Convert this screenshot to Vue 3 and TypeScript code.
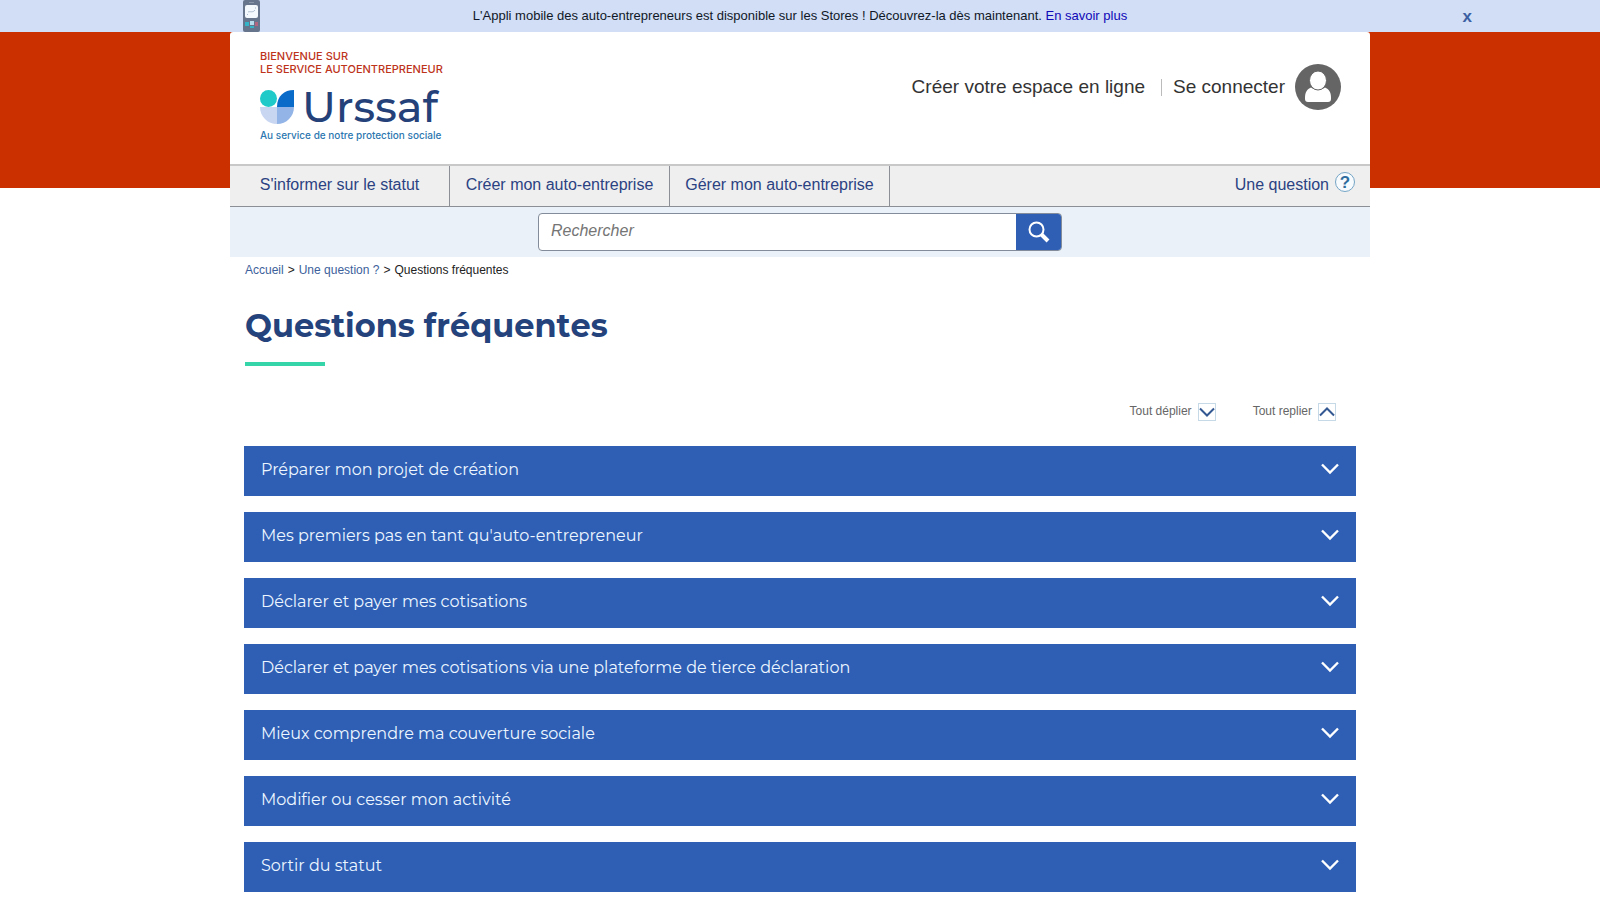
<script setup lang="ts">
import { ref } from 'vue'

interface Section {
  title: string
  open: boolean
}

const bannerVisible = ref<boolean>(true)
const query = ref<string>('')

const navItems: string[] = [
  "S'informer sur le statut",
  'Créer mon auto-entreprise',
  'Gérer mon auto-entreprise',
]

const sections = ref<Section[]>(
  [
    'Préparer mon projet de création',
    "Mes premiers pas en tant qu'auto-entrepreneur",
    'Déclarer et payer mes cotisations',
    'Déclarer et payer mes cotisations via une plateforme de tierce déclaration',
    'Mieux comprendre ma couverture sociale',
    'Modifier ou cesser mon activité',
    'Sortir du statut',
  ].map((title) => ({ title, open: false })),
)

function setAll(open: boolean): void {
  sections.value.forEach((s) => (s.open = open))
}
</script>

<template>
  <div class="page">
    <div v-if="bannerVisible" class="banner">
      <svg class="phone" width="17" height="32" viewBox="0 0 17 32" aria-hidden="true">
        <rect width="17" height="32" rx="2" fill="#66748c" />
        <rect x="2" y="5" width="13" height="13" rx="2" fill="#f4f9fd" />
        <path d="M4.500 15v-1M12 8h1M5 12c2-1 5 1 7-2" stroke="#a9b9cc" fill="none" />
        <path d="M6 2.500h5" stroke="#8a97ab" />
        <rect x="2" y="22" width="4" height="4" fill="#35b4c8" />
        <rect x="7" y="21" width="4" height="4" fill="#b9dcec" />
        <rect x="12" y="22" width="3" height="4" fill="#b2657f" />
        <rect x="7" y="26" width="4" height="2" fill="#35b4c8" />
      </svg>
      <p class="banner-text">
        L'Appli mobile des auto-entrepreneurs est disponible sur les Stores ! Découvrez-la dès maintenant.
        <a href="#">En savoir plus</a>
      </p>
      <button class="close" type="button" aria-label="Fermer" @click="bannerVisible = false">x</button>
    </div>

    <div class="backdrop">
      <div class="container">
        <header class="header">
          <a class="brand" href="#">
            <span class="welcome">BIENVENUE SUR<br />LE SERVICE AUTOENTREPRENEUR</span>
            <span class="logo">
              <svg width="34" height="34" viewBox="0 0 34 34" aria-hidden="true">
                <circle cx="8.500" cy="8.500" r="8.500" fill="#1fcac8" />
                <path d="M17 17C17 6 24 0 34 0v17z" fill="#0a6bc9" />
                <path d="M0 17h17v17C7.500 34 0 26.500 0 17z" fill="#c9d6f2" />
                <path d="M17 17h17c0 9.500-7.500 17-17 17z" fill="#92b4e6" />
              </svg>
              <span class="wordmark">Urssaf</span>
            </span>
            <span class="tagline">Au service de notre protection sociale</span>
          </a>
          <div class="account">
            <a href="#">Créer votre espace en ligne</a>
            <span class="divider"></span>
            <a class="login" href="#">
              Se connecter
              <svg width="46" height="46" viewBox="0 0 46 46" aria-hidden="true">
                <circle cx="23" cy="23" r="23" fill="#656565" />
                <path
                  d="M16 23.500c-4 1.500-6 5-6 10V35c0 2 1 3 3 3h20c2 0 3-1 3-3v-1.500c0-5-2-8.500-6-10-4 3-10 3-14 0z"
                  fill="#fff"
                />
                <ellipse cx="23" cy="16.500" rx="8.500" ry="9.500" fill="#fff" stroke="#656565" stroke-width="1" />
              </svg>
            </a>
          </div>
        </header>

        <nav class="nav">
          <a v-for="item in navItems" :key="item" class="nav-item" href="#">{{ item }}</a>
          <a class="help" href="#">
            Une question
            <span class="help-icon" aria-hidden="true">?</span>
          </a>
        </nav>

        <form class="search" role="search" @submit.prevent>
          <div class="search-box">
            <input v-model="query" type="text" placeholder="Rechercher" aria-label="Rechercher" />
            <button type="submit" aria-label="Lancer la recherche">
              <svg width="22" height="22" viewBox="0 0 22 22" fill="none" stroke="#fff" aria-hidden="true">
                <circle cx="8.500" cy="8.500" r="7" stroke-width="2" />
                <path d="M13.500 13.500L20 20" stroke-width="4" />
              </svg>
            </button>
          </div>
        </form>

        <main class="main">
          <div class="crumbs">
            <a href="#">Accueil</a><span>&gt;</span><a href="#">Une question ?</a><span>&gt;</span>Questions
            fréquentes
          </div>
          <h1>Questions fréquentes</h1>

          <div class="toggles">
            <button type="button" @click="setAll(true)">
              Tout déplier
              <svg width="18" height="18" viewBox="0 0 18 18" fill="none" aria-hidden="true">
                <rect x="0.500" y="0.500" width="17" height="17" stroke="#c5d9e6" />
                <path d="M2 5.500l7 7 7-7" stroke="#345992" stroke-width="2" />
              </svg>
            </button>
            <button type="button" @click="setAll(false)">
              Tout replier
              <svg width="18" height="18" viewBox="0 0 18 18" fill="none" aria-hidden="true">
                <rect x="0.500" y="0.500" width="17" height="17" stroke="#c5d9e6" />
                <path d="M2 12.500l7-7 7 7" stroke="#345992" stroke-width="2" />
              </svg>
            </button>
          </div>

          <div class="accordion">
            <button
              v-for="section in sections"
              :key="section.title"
              class="section"
              type="button"
              :aria-expanded="section.open"
              @click="section.open = !section.open"
            >
              {{ section.title }}
              <svg
                :class="{ flipped: section.open }"
                width="18"
                height="12"
                viewBox="0 0 18 12"
                fill="none"
                aria-hidden="true"
              >
                <path d="M1 1.500l8 8 8-8" stroke="#fff" stroke-width="2.400" />
              </svg>
            </button>
          </div>
        </main>
      </div>
    </div>
  </div>
</template>

<style>
body {
  margin: 0;
  background: #fff;
}
</style>

<style scoped>
.page {
  font-family: "Liberation Sans", Arial, sans-serif;
  color: #222;
}
.page * {
  box-sizing: border-box;
}
a {
  text-decoration: none;
}
button {
  font-family: inherit;
  border: 0;
  background: none;
  padding: 0;
  cursor: pointer;
}
svg {
  display: block;
  flex: none;
}
.banner {
  position: relative;
  height: 32px;
  display: flex;
  justify-content: center;
  background: #d1def5;
}
.phone {
  position: absolute;
  left: 15.2%;
  top: 0;
}
.banner-text {
  margin: 0;
  font-size: 13px;
  line-height: 32px;
  color: #101828;
}
.banner-text a {
  color: #1008b8;
}
.close {
  position: absolute;
  right: 8%;
  top: 0;
  font-size: 17px;
  line-height: 34px;
  font-weight: 700;
  color: #3c5fa4;
}
.backdrop {
  background: linear-gradient(#cb3000, #cb3000) no-repeat;
  background-size: 100% 156px;
}
.container {
  width: 100%;
  max-width: 1140px;
  margin: 0 auto;
  background: #fff;
  border-radius: 3px 3px 0 0;
}
.header {
  display: flex;
  justify-content: space-between;
  align-items: flex-start;
  height: 132px;
  padding: 0 29px 0 30px;
}
.brand {
  display: flex;
  flex-direction: column;
  padding-top: 18px;
}
.welcome {
  font-family: Inter, sans-serif;
  font-size: 11px;
  line-height: 13px;
  font-weight: 500;
  color: #bd341b;
}
.logo {
  display: flex;
  align-items: center;
  gap: 8px;
  height: 34px;
  margin-top: 14px;
}
.wordmark {
  font-family: Montserrat, Inter, sans-serif;
  font-size: 43px;
  line-height: 36px;
  font-weight: 500;
  color: #254179;
}
.tagline {
  margin-top: 4px;
  font-family: Inter, sans-serif;
  font-size: 10px;
  line-height: 14px;
  font-weight: 500;
  color: #2c77b0;
}
.account {
  display: flex;
  align-items: center;
  padding-top: 32px;
  font-size: 19px;
}
.account a {
  color: #333;
}
.divider {
  width: 1px;
  height: 17px;
  margin: 0 11px 0 16px;
  background: #bbb;
}
.login {
  display: flex;
  align-items: center;
  gap: 10px;
}
.nav {
  display: flex;
  height: 43px;
  border-top: 2px solid #c8c8c8;
  border-bottom: 1px solid #8c9096;
  background: #efefef;
  font-size: 16px;
  line-height: 38px;
}
.nav a {
  color: #2b4282;
}
.nav-item {
  width: 220px;
  border-right: 1px solid #8c9096;
  text-align: center;
}
.help {
  display: flex;
  gap: 6px;
  margin-left: auto;
  padding-right: 15px;
}
.help-icon {
  width: 20px;
  height: 20px;
  margin-top: 6px;
  border: 1px solid #75a5c6;
  border-radius: 50%;
  background: #f7fbfd;
  font-size: 17px;
  line-height: 19px;
  font-weight: 700;
  text-align: center;
  color: #2f6d9f;
}
.search {
  display: flex;
  justify-content: center;
  padding: 6px 15px;
  background: #eaf1f8;
}
.search-box {
  display: flex;
  width: 524px;
  height: 38px;
  border: 1px solid #838c9a;
  border-radius: 4px;
  background: #fff;
  overflow: hidden;
}
.search-box input {
  flex: 1;
  min-width: 0;
  border: 0;
  padding: 0 12px 2px;
  outline: 0;
  background: none;
  font: italic 16px "Liberation Sans", Arial, sans-serif;
  color: #333;
}
.search-box input::placeholder {
  color: #757575;
  opacity: 1;
}
.search-box button {
  display: flex;
  align-items: center;
  justify-content: center;
  width: 45px;
  background: #2e5fb5;
}
.main {
  padding: 0 14px;
}
.crumbs {
  padding: 5px 1px 0;
  font-size: 12px;
  line-height: 16px;
  color: #222;
}
.crumbs a {
  color: #3c619b;
}
.crumbs span {
  margin: 0 4px;
}
h1 {
  margin: 28px 1px 0;
  font-family: Montserrat, Inter, sans-serif;
  font-size: 32px;
  line-height: 40px;
  font-weight: 700;
  font-kerning: none;
  color: #24427c;
}
h1::after {
  content: "";
  display: block;
  width: 80px;
  height: 4px;
  margin-top: 16px;
  background: #35d4a9;
}
.toggles {
  display: flex;
  justify-content: flex-end;
  gap: 37px;
  margin-top: 37px;
  padding-right: 20px;
}
.toggles button {
  display: flex;
  gap: 6px;
  font-size: 12px;
  line-height: 16px;
  color: #666;
}
.accordion {
  display: flex;
  flex-direction: column;
  gap: 16px;
  margin-top: 25px;
  padding-bottom: 4px;
}
.section {
  display: flex;
  justify-content: space-between;
  height: 50px;
  padding: 12px 17px 0;
  background: #2e5fb5;
  font-family: Montserrat, Inter, sans-serif;
  font-size: 16px;
  line-height: 24px;
  text-align: left;
  color: #edf6ff;
}
.section svg {
  margin-top: 5px;
}
.flipped {
  transform: rotate(180deg);
}
</style>
